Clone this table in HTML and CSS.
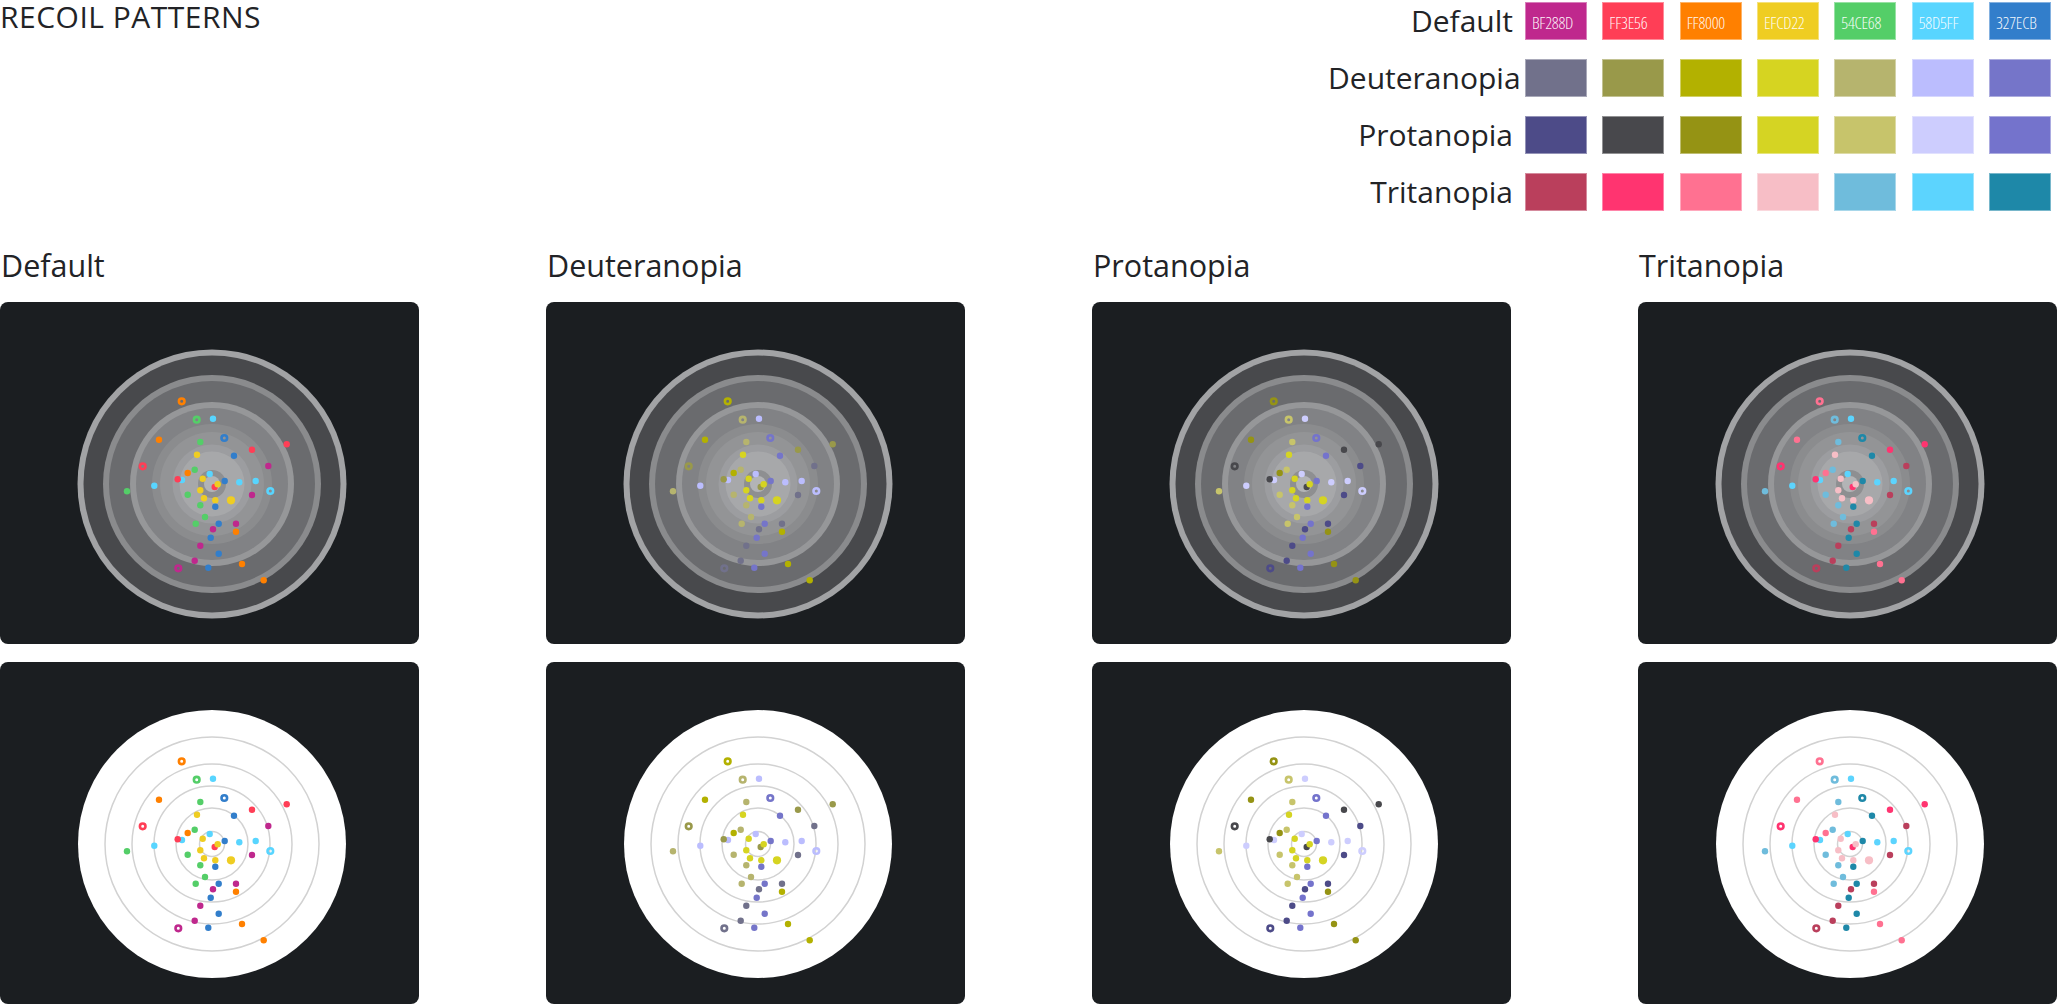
FILE: index.html
```html
<!DOCTYPE html>
<html lang="en">
<head>
<meta charset="utf-8">
<title>Recoil Patterns</title>
<link rel="stylesheet" href="styles.css">
</head>
<body>
<svg class="defs" aria-hidden="true" width="0" height="0">
  <defs>
    <g id="target-dark" transform="translate(212 182)">
      <circle r="134.5" fill="#a2a3a5"/>
      <circle r="128.5" fill="#48494c"/>
      <circle r="109" fill="#8a8b8d"/>
      <circle r="103" fill="#6a6b6e"/>
      <circle r="82" fill="#969799"/>
      <circle r="76" fill="#818285"/>
      <circle r="60" fill="#8b8c8e"/>
      <circle r="52" fill="#939496"/>
      <circle r="39.5" fill="#9c9da0"/>
      <circle r="32.5" fill="#a7a8aa"/>
      <circle r="14" fill="#8e8f91"/>
      <circle r="8" fill="#b3b4b6"/>
    </g>
    <g id="target-light" transform="translate(212 182)">
      <circle r="134" fill="#ffffff"/>
      <g fill="none" stroke="#d2d2d2" stroke-width="1.5">
        <circle r="107"/>
        <circle r="80"/>
        <circle r="58"/>
        <circle r="36"/>
        <circle r="12.5"/>
      </g>
    </g>
    <g id="dots" transform="translate(212 182)">
      <circle class="h c2" cx="-30.3" cy="-82.7" r="2.8"/>
      <circle class="h c4" cx="-15.3" cy="-64.3" r="2.8"/>
      <circle class="s c5" cx="1" cy="-65.3" r="3.2"/>
      <circle class="s c2" cx="-53" cy="-44.3" r="3.2"/>
      <circle class="h c6" cx="12.3" cy="-46" r="2.8"/>
      <circle class="s c4" cx="-11.7" cy="-42" r="3.2"/>
      <circle class="s c1" cx="74.7" cy="-39.7" r="3.2"/>
      <circle class="s c1" cx="40" cy="-34.3" r="3.2"/>
      <circle class="s c3" cx="-15" cy="-29.3" r="3.2"/>
      <circle class="s c6" cx="22" cy="-28.3" r="3.2"/>
      <circle class="h c1" cx="-69.3" cy="-17.7" r="2.8"/>
      <circle class="s c0" cx="56.3" cy="-18" r="3.2"/>
      <circle class="s c4" cx="-17.3" cy="-14.3" r="3.2"/>
      <circle class="s c2" cx="-24.3" cy="-11" r="3.2"/>
      <circle class="s c5" cx="-2.3" cy="-10" r="3.2"/>
      <circle class="s c5" cx="-30" cy="-4" r="3.2"/>
      <circle class="s c1" cx="-34.3" cy="-4.7" r="3.2"/>
      <circle class="s c3" cx="-9.3" cy="-5.3" r="3.2"/>
      <circle class="s c6" cx="12.7" cy="-3" r="3.2"/>
      <circle class="s c5" cx="27.3" cy="-1.7" r="3.2"/>
      <circle class="s c5" cx="43.7" cy="-3" r="3.2"/>
      <circle class="s c1" cx="2.7" cy="3" r="3.2"/>
      <circle class="s c3" cx="5.7" cy="0.3" r="3.2"/>
      <circle class="s c5" cx="-57.7" cy="1.7" r="3.2"/>
      <circle class="s c4" cx="-85" cy="7.3" r="3.2"/>
      <circle class="s c3" cx="-11.7" cy="6.3" r="3.2"/>
      <circle class="h c5" cx="58.3" cy="7" r="2.8"/>
      <circle class="s c4" cx="-24.3" cy="10.7" r="3.2"/>
      <circle class="s c0" cx="40" cy="11" r="3.2"/>
      <circle class="s c3" cx="-8" cy="14.3" r="3.2"/>
      <circle class="s c3" cx="3.3" cy="16.3" r="3.2"/>
      <circle class="s c3" cx="19" cy="16.3" r="4.1"/>
      <circle class="s c4" cx="-11.7" cy="21.3" r="3.2"/>
      <circle class="s c6" cx="3.3" cy="22.7" r="3.2"/>
      <circle class="s c4" cx="-7" cy="33" r="3.2"/>
      <circle class="s c4" cx="-16.3" cy="39.7" r="3.2"/>
      <circle class="s c6" cx="6.7" cy="39.7" r="3.2"/>
      <circle class="s c0" cx="24" cy="39.7" r="3.2"/>
      <circle class="s c0" cx="1" cy="45.3" r="3.2"/>
      <circle class="s c2" cx="24" cy="47.7" r="3.2"/>
      <circle class="s c6" cx="-1.3" cy="53.7" r="3.2"/>
      <circle class="s c0" cx="-11.7" cy="61.7" r="3.2"/>
      <circle class="s c6" cx="6.7" cy="69.7" r="3.2"/>
      <circle class="s c0" cx="-17.3" cy="76.7" r="3.2"/>
      <circle class="h c0" cx="-33.7" cy="84.3" r="2.8"/>
      <circle class="s c6" cx="-3.7" cy="83.7" r="3.2"/>
      <circle class="s c2" cx="30" cy="80" r="3.2"/>
      <circle class="s c2" cx="51.7" cy="96.3" r="3.2"/>
    </g>
  </defs>
</svg>

<header class="top">
  <h1 class="title">RECOIL PATTERNS</h1>
  <div class="legend">
    <div class="legend-row pal-default">
      <span class="legend-label">Default</span>
      <div class="swatches">
        <span class="swatch sw0">BF288D</span>
        <span class="swatch sw1">FF3E56</span>
        <span class="swatch sw2">FF8000</span>
        <span class="swatch sw3">EFCD22</span>
        <span class="swatch sw4">54CE68</span>
        <span class="swatch sw5">58D5FF</span>
        <span class="swatch sw6">327ECB</span>
      </div>
    </div>
    <div class="legend-row pal-deut">
      <span class="legend-label">Deuteranopia</span>
      <div class="swatches">
        <span class="swatch sw0"></span>
        <span class="swatch sw1"></span>
        <span class="swatch sw2"></span>
        <span class="swatch sw3"></span>
        <span class="swatch sw4"></span>
        <span class="swatch sw5"></span>
        <span class="swatch sw6"></span>
      </div>
    </div>
    <div class="legend-row pal-prot">
      <span class="legend-label">Protanopia</span>
      <div class="swatches">
        <span class="swatch sw0"></span>
        <span class="swatch sw1"></span>
        <span class="swatch sw2"></span>
        <span class="swatch sw3"></span>
        <span class="swatch sw4"></span>
        <span class="swatch sw5"></span>
        <span class="swatch sw6"></span>
      </div>
    </div>
    <div class="legend-row pal-trit">
      <span class="legend-label">Tritanopia</span>
      <div class="swatches">
        <span class="swatch sw0"></span>
        <span class="swatch sw1"></span>
        <span class="swatch sw2"></span>
        <span class="swatch sw3"></span>
        <span class="swatch sw4"></span>
        <span class="swatch sw5"></span>
        <span class="swatch sw6"></span>
      </div>
    </div>
  </div>
</header>

<main class="grid">
  <section class="col pal-default">
    <h2 class="col-title">Default</h2>
    <div class="card"><svg class="target" viewBox="0 0 419 342"><use href="#target-dark"/><use href="#dots"/></svg></div>
    <div class="card"><svg class="target" viewBox="0 0 419 342"><use href="#target-light"/><use href="#dots"/></svg></div>
  </section>
  <section class="col pal-deut">
    <h2 class="col-title">Deuteranopia</h2>
    <div class="card"><svg class="target" viewBox="0 0 419 342"><use href="#target-dark"/><use href="#dots"/></svg></div>
    <div class="card"><svg class="target" viewBox="0 0 419 342"><use href="#target-light"/><use href="#dots"/></svg></div>
  </section>
  <section class="col pal-prot">
    <h2 class="col-title">Protanopia</h2>
    <div class="card"><svg class="target" viewBox="0 0 419 342"><use href="#target-dark"/><use href="#dots"/></svg></div>
    <div class="card"><svg class="target" viewBox="0 0 419 342"><use href="#target-light"/><use href="#dots"/></svg></div>
  </section>
  <section class="col pal-trit">
    <h2 class="col-title">Tritanopia</h2>
    <div class="card"><svg class="target" viewBox="0 0 419 342"><use href="#target-dark"/><use href="#dots"/></svg></div>
    <div class="card"><svg class="target" viewBox="0 0 419 342"><use href="#target-light"/><use href="#dots"/></svg></div>
  </section>
</main>
</body>
</html>
```

FILE: styles.css
```css
html, body {
  margin: 0;
  padding: 0;
  background: #ffffff;
}

body {
  font-family: "Open Sans", "Noto Sans", sans-serif;
  color: #222326;
  width: 2057px;
  overflow: hidden;
}

.defs {
  display: block;
  width: 0;
  height: 0;
  overflow: hidden;
}

/* palettes */
.pal-default {
  --c0: #bf288d; --c1: #ff3e56; --c2: #ff8000; --c3: #efcd22;
  --c4: #54ce68; --c5: #58d5ff; --c6: #327ecb;
}
.pal-deut {
  --c0: #71718b; --c1: #99994a; --c2: #b3b100; --c3: #d6d421;
  --c4: #b6b46e; --c5: #bbbdfe; --c6: #7575c9;
}
.pal-prot {
  --c0: #4d4b88; --c1: #48484c; --c2: #959314; --c3: #d5d423;
  --c4: #c7c46b; --c5: #cdcdfe; --c6: #7473cc;
}
.pal-trit {
  --c0: #ba3f5c; --c1: #ff3470; --c2: #ff7191; --c3: #f7bec6;
  --c4: #6fbcdc; --c5: #5cd4fe; --c6: #1e88a8;
}

/* header */
.top {
  display: flex;
  justify-content: space-between;
  align-items: flex-start;
  padding: 2px 6px 0 0;
}

.title {
  margin: 0;
  font-size: 30px;
  font-weight: 400;
  line-height: 30px;
  letter-spacing: 0.5px;
}

.legend {
  display: flex;
  flex-direction: column;
  gap: 19px;
}

.legend-row {
  display: flex;
  align-items: center;
  gap: 12px;
  height: 38px;
}

.legend-label {
  width: 185px;
  text-align: right;
  white-space: nowrap;
  font-size: 30px;
  line-height: 38px;
}

.swatches {
  display: flex;
  gap: 15.33px;
}

.swatch {
  box-sizing: border-box;
  width: 62px;
  height: 38px;
  border: 1px solid rgba(255, 255, 255, 0.4);
  display: flex;
  align-items: center;
  padding: 3px 0 0 6px;
  color: rgba(255, 255, 255, 0.95);
  font-size: 17px;
  font-weight: 300;
  font-stretch: 87.5%;
  letter-spacing: -0.3px;
  line-height: 1;
  white-space: nowrap;
}

.sw0 { background: var(--c0); }
.sw1 { background: var(--c1); }
.sw2 { background: var(--c2); }
.sw3 { background: var(--c3); }
.sw4 { background: var(--c4); }
.sw5 { background: var(--c5); }
.sw6 { background: var(--c6); }

/* grid of targets */
.grid {
  display: grid;
  grid-template-columns: repeat(4, 419px);
  column-gap: 127px;
  margin-top: 34px;
}

.col {
  display: flex;
  flex-direction: column;
}

.col-title {
  margin: 0 0 16px 0;
  padding-left: 1px;
  font-size: 30.5px;
  font-weight: 400;
  line-height: 41px;
}

.card {
  height: 342px;
  background: #1b1e21;
  border-radius: 8px;
  overflow: hidden;
}

.card + .card {
  margin-top: 18px;
}

.target {
  display: block;
  width: 419px;
  height: 342px;
}

/* shots */
.c0 { color: var(--c0); }
.c1 { color: var(--c1); }
.c2 { color: var(--c2); }
.c3 { color: var(--c3); }
.c4 { color: var(--c4); }
.c5 { color: var(--c5); }
.c6 { color: var(--c6); }

.s {
  fill: currentColor;
}

.h {
  fill: none;
  stroke: currentColor;
  stroke-width: 2.6px;
}
```
